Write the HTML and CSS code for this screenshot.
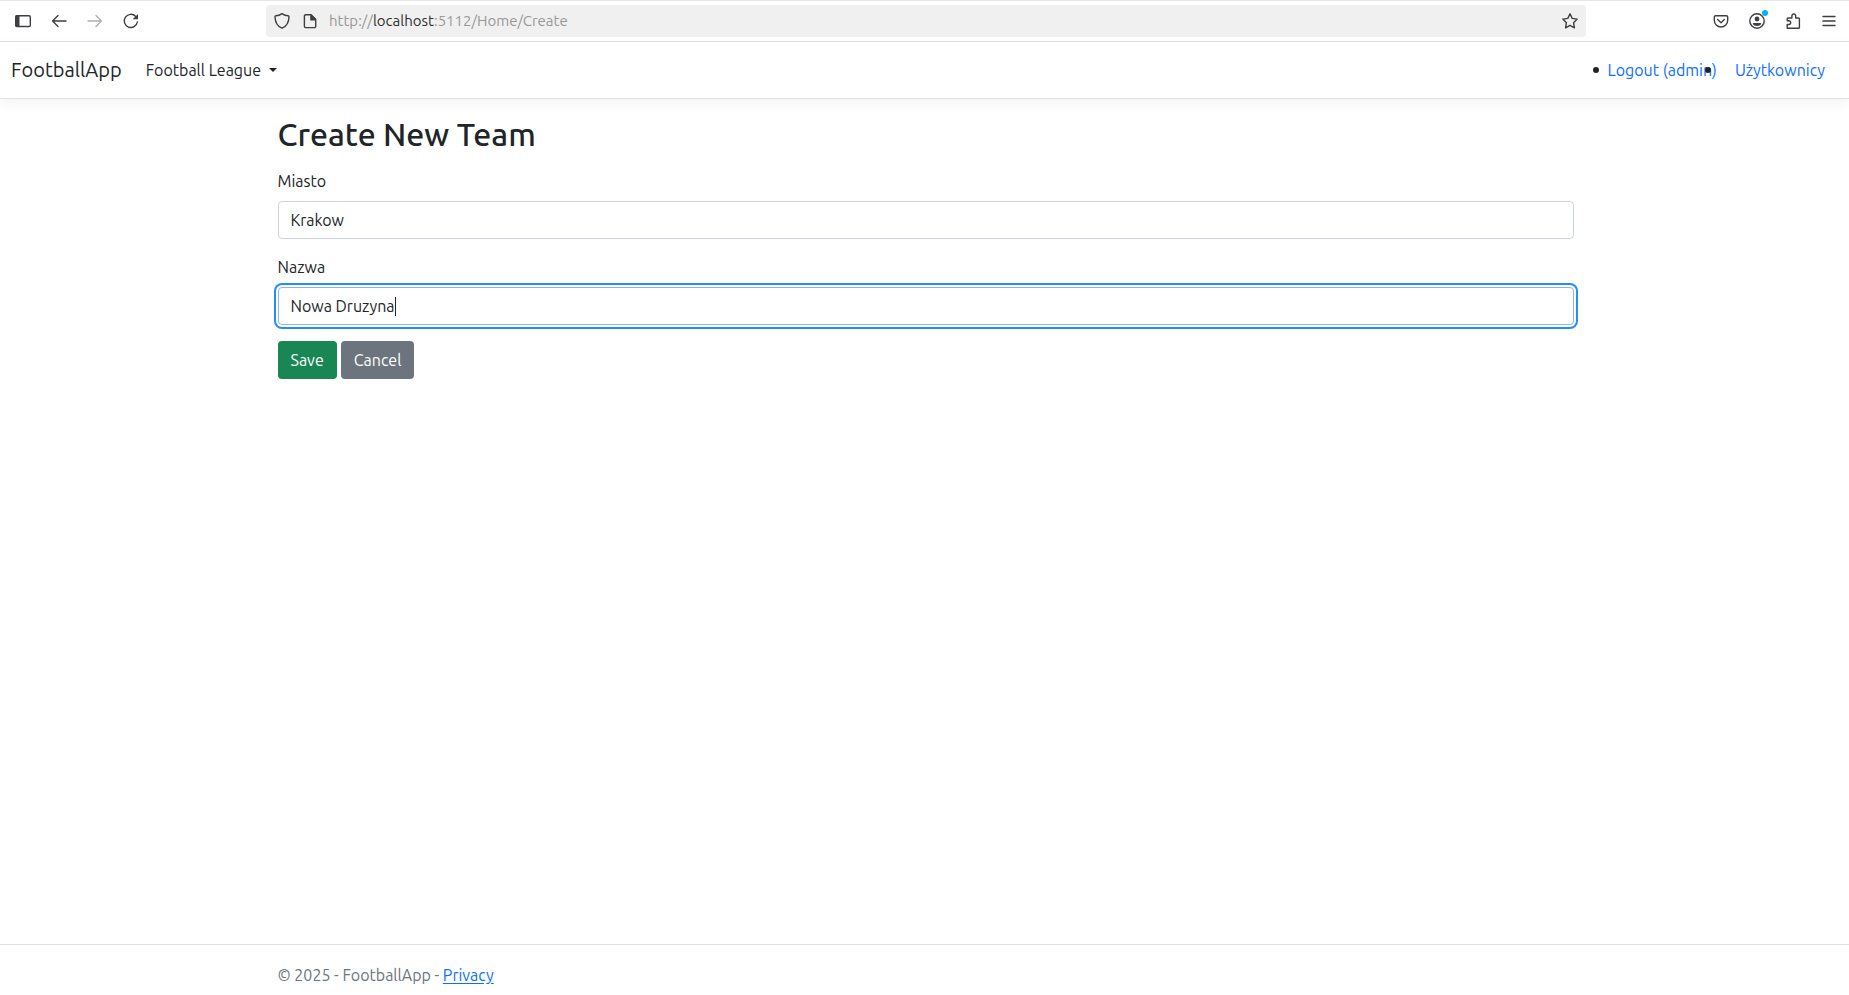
FILE: index.html
```html
<!DOCTYPE html>
<html lang="pl">
<head>
<meta charset="utf-8">
<meta name="viewport" content="width=device-width, initial-scale=1">
<title>Create New Team - FootballApp</title>
<link rel="stylesheet" href="styles.css">
</head>
<body>
<div class="browser-bar">
  <div class="browser-nav">
    <button class="tool" type="button" aria-label="Sidebar"><svg viewBox="0 0 18 18"><rect x="1.700" y="3.700" width="14.600" height="10.800" rx="1.300"/><path class="solid" d="M1.500 3.500h4v11h-4z"/></svg></button>
    <button class="tool" type="button" aria-label="Back"><svg viewBox="0 0 18 18"><path d="M16 9H2.800M8 3.600 2.600 9 8 14.400"/></svg></button>
    <button class="tool tool-off" type="button" aria-label="Forward" disabled><svg viewBox="0 0 18 18"><path d="M2 9h13.200M10 3.600 15.400 9 10 14.400"/></svg></button>
    <button class="tool" type="button" aria-label="Reload"><svg viewBox="0 0 18 18"><path d="M15.400 10a6.600 6.600 0 1 1-1.700-5.600"/><path class="solid" d="M16 2v5.300h-5.300z"/></svg></button>
  </div>
  <div class="address">
    <svg viewBox="0 0 18 18"><path d="M9 1.600c1.700 1.300 4 2.100 6.200 2.200.6 0 .8.400.8.900-.1 5.600-2.200 9.500-7 11.500C4.200 14.200 2.100 10.300 2 4.700c0-.5.2-.9.8-.9C5 3.700 7.300 2.900 9 1.600z"/></svg>
    <svg viewBox="0 0 18 18"><path d="M4.700 2.700h5.400l4.600 4.600v7a1.300 1.300 0 0 1-1.300 1.300H4.700a1.300 1.300 0 0 1-1.300-1.300V4a1.300 1.300 0 0 1 1.300-1.300z"/><path class="solid" d="M9.200 2.700h1.300l4.200 4.200v1.500H9.200z"/></svg>
    <a class="url" href="#">http://<span class="host">localhost</span>:5112/Home/Create</a>
    <svg viewBox="0 0 18 18"><path d="m9 1.800 2.200 4.600 5 .7-3.600 3.600.8 5.100L9 13.400l-4.400 2.400.8-5.100-3.600-3.600 5-.7z"/></svg>
  </div>
  <div class="browser-tools">
    <button class="tool" type="button" aria-label="Pocket"><svg viewBox="0 0 18 18"><path d="M3.700 3.700h10.600c.8 0 1.400.6 1.400 1.400v3.200a6.700 6.700 0 0 1-13.400 0V5.100c0-.8.6-1.400 1.400-1.400z"/><path d="M5.700 7.500 9 10.700l3.300-3.200"/></svg></button>
    <button class="tool account" type="button" aria-label="Account"><svg viewBox="0 0 18 18"><circle cx="9" cy="9" r="7.200"/><circle class="solid" cx="9" cy="7" r="2.400"/><path class="solid" d="M4.800 11h8.400c0 2-1.600 3-4.200 3s-4.200-1-4.200-3z"/></svg></button>
    <button class="tool" type="button" aria-label="Extensions"><svg viewBox="0 0 18 18"><path d="M3.200 16.200h11.400c.5 0 .8-.3.800-.8V6.800c0-.5-.3-.8-.8-.8h-2.900V3.900a1.900 1.900 0 0 0-3.800 0V6H4c-.5 0-.8.300-.8.800v1.900h1.600a1.900 1.900 0 0 1 0 3.800H3.200z"/></svg></button>
    <button class="tool" type="button" aria-label="Menu"><svg viewBox="0 0 18 18"><path d="M3 4.500h12M3 9h12M3 13.500h12"/></svg></button>
  </div>
</div>

<header class="navbar">
  <a class="brand" href="#">FootballApp</a>
  <button class="dropdown" type="button">Football League</button>
  <ul class="user-links">
    <li><a href="#">Logout (admin)</a></li>
    <li><a href="#">Użytkownicy</a></li>
  </ul>
</header>

<main class="container">
  <h1>Create New Team</h1>
  <form>
    <label for="city">Miasto</label>
    <input id="city" type="text" value="Krakow">
    <label for="name">Nazwa</label>
    <div class="active-field">
      <input id="name" type="text" value="Nowa Druzyna">
      <span class="caret"></span>
    </div>
    <div class="actions">
      <button class="btn btn-save" type="submit">Save</button>
      <a class="btn btn-cancel" href="#">Cancel</a>
    </div>
  </form>
</main>

<footer class="footer">
  <div class="container">© 2025 - FootballApp - <a href="#">Privacy</a></div>
</footer>
</body>
</html>
```
FILE: styles.css
```css
*, *::before, *::after { box-sizing: border-box; }

body {
  margin: 0;
  min-height: 100vh;
  display: flex;
  flex-direction: column;
  background: #fff;
  color: #212529;
  font: 16px/24px Ubuntu, "Noto Sans", sans-serif;
}

button, input { font: inherit; color: inherit; }
a { color: #0d6efd; }

.browser-bar {
  display: flex;
  align-items: center;
  justify-content: space-between;
  height: 42px;
  padding: 0 11px 0 14px;
  border-top: 1px solid #e6e6e8;
  border-bottom: 1px solid #e0e0e4;
}
.browser-bar svg {
  display: block;
  flex: none;
  width: 18px;
  height: 18px;
  fill: none;
  stroke: #3f3f42;
  stroke-width: 1.4;
  stroke-linecap: round;
  stroke-linejoin: round;
}
.browser-bar .solid { fill: #3f3f42; stroke: none; }
.browser-nav, .browser-tools { display: flex; gap: 18px; }
.browser-nav { width: 252px; }
.tool {
  padding: 0;
  border: 0;
  background: none;
}
.tool-off { opacity: 0.4; }
.account { position: relative; }
.account::after {
  content: "";
  position: absolute;
  top: -2px;
  right: -2px;
  width: 6px;
  height: 6px;
  border-radius: 50%;
  background: #00b3f4;
}
.address {
  flex: 1;
  display: flex;
  align-items: center;
  gap: 10px;
  height: 32px;
  margin-right: 126px;
  padding: 0 7px;
  border-radius: 4px;
  background: #f0f0f0;
}
.url {
  flex: 1;
  color: #989898;
  font-size: 15px;
  text-decoration: none;
}
.host { color: #303030; }

.navbar {
  display: flex;
  align-items: center;
  height: 57px;
  padding: 0 24px 0 11px;
  border-bottom: 1px solid #dee2e6;
  box-shadow: 0 4px 12px rgba(0, 0, 0, 0.05);
}
.brand {
  color: #212529;
  font-size: 20px;
  text-decoration: none;
}
.dropdown {
  display: flex;
  align-items: center;
  gap: 8px;
  margin-left: 24px;
  padding: 0;
  border: 0;
  background: none;
}
.dropdown::after {
  content: "";
  border: 4px solid transparent;
  border-top-color: #212529;
  border-bottom: 0;
}
.user-links {
  display: flex;
  gap: 18px;
  margin: 0 0 0 auto;
  padding: 0;
  list-style: none;
}
.user-links li { position: relative; }
.user-links li::before {
  content: "";
  position: absolute;
  top: 9px;
  left: -15px;
  width: 6px;
  height: 6px;
  border-radius: 50%;
  background: #212529;
}
.user-links li + li::before { left: -30px; }
.user-links a { text-decoration: none; }

.container {
  width: 100%;
  max-width: 1320px;
  margin: 0 auto;
  padding: 0 11px 0 13px;
}
main { flex: 1; }
h1 {
  margin: 16px 0;
  font-size: 32px;
  font-weight: 500;
  line-height: 38px;
}
label {
  display: block;
  margin-bottom: 8px;
}
input {
  display: block;
  width: 100%;
  height: 38px;
  padding: 6px 12px;
  border: 1px solid #ced4da;
  border-radius: 4px;
  background: #fff;
}
#city { margin-bottom: 16px; }
.active-field { position: relative; }
#name {
  border-color: #86b7fe;
  outline: 0;
  box-shadow: 0 0 0 2px #fff, 0 0 0 4px #258cfb;
}
.caret {
  position: absolute;
  top: 10px;
  left: 117px;
  width: 1px;
  height: 19px;
  background: #212529;
}
.actions {
  display: flex;
  gap: 4px;
  margin-top: 16px;
}
.btn {
  padding: 7px 13px;
  border: 0;
  border-radius: 4px;
  color: #fff;
  text-decoration: none;
}
.btn-save { background: #198754; }
.btn-cancel { background: #6c757d; }

.footer {
  padding: 18px 0 8px;
  border-top: 1px solid #dee2e6;
  color: #6c757d;
}
.footer a { text-underline-offset: 2px; }
```
